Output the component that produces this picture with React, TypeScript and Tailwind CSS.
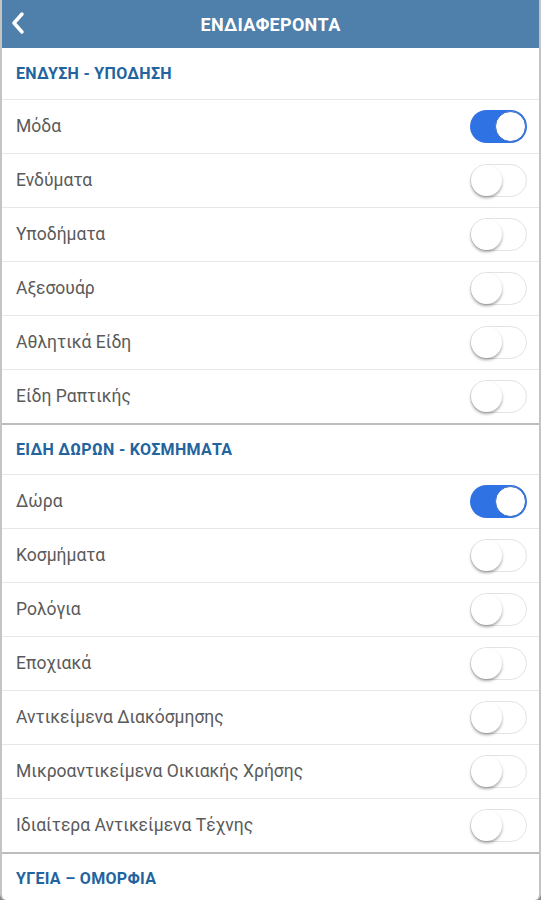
import React from "react";

type Item = { label: string; on?: boolean };
type Section = { title: string; items: Item[] };

const sections: Section[] = [
  {
    title: "ΕΝΔΥΣΗ - ΥΠΟΔΗΣΗ",
    items: [
      { label: "Μόδα", on: true },
      { label: "Ενδύματα" },
      { label: "Υποδήματα" },
      { label: "Αξεσουάρ" },
      { label: "Αθλητικά Είδη" },
      { label: "Είδη Ραπτικής" },
    ],
  },
  {
    title: "ΕΙΔΗ ΔΩΡΩΝ - ΚΟΣΜΗΜΑΤΑ",
    items: [
      { label: "Δώρα", on: true },
      { label: "Κοσμήματα" },
      { label: "Ρολόγια" },
      { label: "Εποχιακά" },
      { label: "Αντικείμενα Διακόσμησης" },
      { label: "Μικροαντικείμενα Οικιακής Χρήσης" },
      { label: "Ιδιαίτερα Αντικείμενα Τέχνης" },
    ],
  },
  { title: "ΥΓΕΙΑ – ΟΜΟΡΦΙΑ", items: [] },
];

const Toggle = ({ on }: { on?: boolean }) =>
  on ? (
    <div className="w-[57px] h-[33px] rounded-full bg-[#2f72e4] flex items-center justify-end pr-[1px]">
      <div className="w-[31px] h-[31px] rounded-full bg-white border border-[#3b6fc4]" />
    </div>
  ) : (
    <div className="w-[57px] h-[33px] rounded-full bg-white border border-[#e3e3e3] flex items-center">
      <div className="w-[31px] h-[31px] rounded-full bg-white shadow-[0_2px_3px_rgba(0,0,0,0.35)]" />
    </div>
  );

export default function App() {
  return (
    <div className="min-h-[900px] bg-[#8a8a8a] font-['Roboto',sans-serif]">
      <div className="h-[900px] bg-white border-x-2 border-[#c4c4c4] rounded-b-md overflow-hidden flex flex-col">
        <header className="h-[48px] bg-[#4e80ab] flex items-center relative shrink-0">
          <svg className="absolute left-[7px] top-[11px]" width="18" height="24" viewBox="0 0 18 24">
            <path d="M13 3 L5 12 L13 21" fill="none" stroke="white" strokeWidth="3.5" strokeLinecap="round" strokeLinejoin="round" />
          </svg>
          <h1 className="w-full text-center text-white text-[18px] font-bold tracking-[0.3px]">ΕΝΔΙΑΦΕΡΟΝΤΑ</h1>
        </header>
        {sections.map((s, si) => (
          <section key={s.title} className={s.items.length ? "border-b-2 border-[#bdbdbd]" : ""}>
            <div
              className={
                (si === 0 ? "h-[51px]" : "h-[49px]") +
                " flex items-center px-[14px] text-[16px] font-bold text-[#23649e] tracking-[0.3px]"
              }
            >
              {s.title}
            </div>
            {s.items.map((it) => (
              <div key={it.label} className="h-[54px] border-t border-[#e6e6e6] flex items-center justify-between pl-[14px] pr-[12px]">
                <span className="text-[17.5px] text-[#5a5a5a]">{it.label}</span>
                <Toggle on={it.on} />
              </div>
            ))}
          </section>
        ))}
      </div>
    </div>
  );
}
